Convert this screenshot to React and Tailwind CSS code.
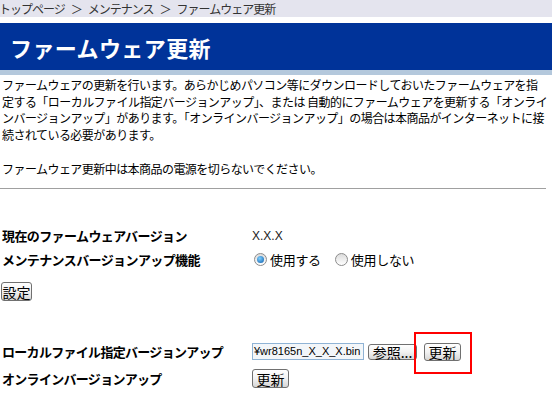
import React from "react";

const Btn = ({ children, className = "" }) => (
  <span
    className={
      "inline-flex items-center justify-center border border-[#707070] rounded-[3px] bg-gradient-to-b from-white via-[#f2f2f2] to-[#d6d6d6] text-[14px] leading-none text-black " +
      className
    }
  >
    {children}
  </span>
);

const Radio = ({ checked }) => (
  <span className="inline-flex items-center justify-center w-[13px] h-[13px] rounded-full border border-[#8c8c8c] bg-gradient-to-b from-[#dcdcdc] to-white">
    {checked && (
      <span className="w-[7px] h-[7px] rounded-full bg-[radial-gradient(circle_at_40%_35%,#7fd0ff,#0b5cab)]" />
    )}
  </span>
);

const lines = [
  "ファームウェアの更新を行います。あらかじめパソコン等にダウンロードしておいたファームウェアを指",
  "定する「ローカルファイル指定バージョンアップ」、または 自動的にファームウェアを更新する「オンライ",
  "ンバージョンアップ」があります。「オンラインバージョンアップ」の場合は本商品がインターネットに接",
  "続されている必要があります。",
];

export default function App() {
  return (
    <div className="w-[552px] h-[393px] overflow-hidden bg-white text-black font-['Noto_Sans_CJK_JP','Liberation_Sans',sans-serif]">
      {/* パンくず */}
      <div className="h-[17px] bg-[#e4e4ee] text-[12px] leading-[17px] tracking-[-1px] text-[#333] whitespace-nowrap -ml-[1px]">
        トップページ<span className="mx-[6px]">＞</span>メンテナンス
        <span className="mx-[6px]">＞</span>ファームウェア更新
      </div>
      <div className="h-[6px]" />
      <div className="h-[47px] bg-[#003399] flex items-center pl-[10px]">
        <h1 className="text-white font-bold text-[22px] tracking-[0.4px] leading-none">
          ファームウェア更新
        </h1>
      </div>
      <div className="h-[5px] bg-[#b4c8dc]" />

      {/* 説明 */}
      <div className="px-[2px] pt-[2px] text-[12px] leading-[16.5px] tracking-[-0.55px]">
        {lines.map((l, i) => (
          <div key={i} className="whitespace-nowrap">
            {l}
          </div>
        ))}
        <div className="h-[18px]" />
        <div className="whitespace-nowrap">
          ファームウェア更新中は本商品の電源を切らないでください。
        </div>
      </div>
      <div className="mt-[10px] mr-[6px] h-[1px] bg-[#a0a0a0]" />

      {/* 設定 */}
      <div className="mt-[35px] grid grid-cols-[250px_1fr] auto-rows-[24px] pl-[2px] text-[12px] items-center">
        <div className="font-bold text-[13px] tracking-[-0.6px]">
          現在のファームウェアバージョン
        </div>
        <div className="font-['Liberation_Sans',sans-serif] text-[12px] text-[#222]">
          X.X.X
        </div>
        <div className="font-bold text-[13px] tracking-[-0.6px]">
          メンテナンスバージョンアップ機能
        </div>
        <div className="flex items-center text-[13px] tracking-[-0.3px]">
          <span className="ml-[2px] flex items-center gap-[3px]">
            <Radio checked />
            使用する
          </span>
          <span className="ml-[14px] flex items-center gap-[3px]">
            <Radio />
            使用しない
          </span>
        </div>
      </div>
      <div className="mt-[7px] pl-[1px] h-[19px]">
        <Btn className="w-[31px] h-[19px]">設定</Btn>
      </div>

      <div className="mt-[42px] grid grid-cols-[250px_1fr] grid-rows-[24px_22px] gap-y-[4px] pl-[2px] items-center">
        <div className="font-bold text-[13px] tracking-[-0.7px]">
          ローカルファイル指定バージョンアップ
        </div>
        <div className="flex items-center">
          <span className="w-[112px] h-[17px] border border-[#8fb3d5] bg-[#f3f6f9] overflow-hidden flex items-center text-[11px] font-['Liberation_Sans',sans-serif] whitespace-nowrap pl-[1px]">
            ¥wr8165n_X_X_X.bin
          </span>
          <Btn className="ml-[4px] w-[49px] h-[16px] text-[13px]">参照...</Btn>
          <span className="relative ml-[7px] flex">
            <Btn className="w-[37px] h-[18px]">更新</Btn>
            <span className="absolute -top-[11px] -left-[10px] w-[58px] h-[42px] border-2 border-[#ff0000]" />
          </span>
        </div>
        <div className="font-bold text-[13px] tracking-[-0.7px]">
          オンラインバージョンアップ
        </div>
        <div className="flex items-center h-full">
          <Btn className="w-[37px] h-[19px]">更新</Btn>
        </div>
      </div>
    </div>
  );
}
